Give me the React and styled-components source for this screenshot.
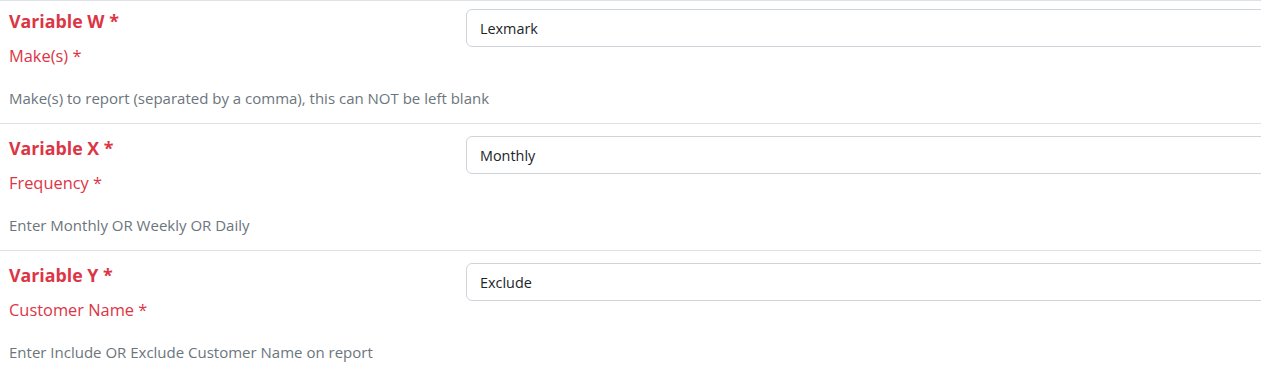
import React from "react";
import styled, { createGlobalStyle } from "styled-components";

const GlobalStyle = createGlobalStyle`
  html, body {
    margin: 0;
    padding: 0;
    background: #fff;
    overflow: hidden;
  }
  body {
    font-family: "Open Sans", "Noto Sans", sans-serif;
  }
`;

const Form = styled.div`
  width: 1290px;
  border-top: 1px solid #dee2e6;
`;

const Row = styled.div`
  display: grid;
  grid-template-columns: 466px 1fr;
  align-items: start;
  padding: ${(p) => (p.$first ? "8px" : "12px")} 0 14px;
  border-bottom: 1px solid #dee2e6;
`;

const LabelCol = styled.div`
  display: flex;
  flex-direction: column;
  min-width: 0;
  padding-left: 9px;
  white-space: nowrap;
`;

const Title = styled.div`
  font-size: 17.8px;
  line-height: 24px;
  font-weight: 700;
  color: #dc3545;
`;

const Label = styled.label`
  margin-top: 11px;
  font-size: 16.4px;
  line-height: 24px;
  color: #dc3545;
`;

const Help = styled.div`
  margin-top: 20px;
  font-size: 15px;
  line-height: 21px;
  color: #6c757d;
  white-space: nowrap;
`;

const Input = styled.input`
  box-sizing: border-box;
  display: block;
  width: 100%;
  height: 38px;
  padding: 0 13px;
  border: 1px solid #ced4da;
  border-radius: 6px;
  font-family: inherit;
  font-size: 14.4px;
  color: #212529;
  background: #fff;
  outline: none;
`;

const fields = [
  {
    title: "Variable W *",
    label: "Make(s) *",
    value: "Lexmark",
    help: "Make(s) to report (separated by a comma), this can NOT be left blank",
  },
  {
    title: "Variable X *",
    label: "Frequency *",
    value: "Monthly",
    help: "Enter Monthly OR Weekly OR Daily",
  },
  {
    title: "Variable Y *",
    label: "Customer Name *",
    value: "Exclude",
    help: "Enter Include OR Exclude Customer Name on report",
  },
];

const App = () => {
  return (
    <>
      <GlobalStyle />
      <Form>
        {fields.map((f, i) => (
          <Row key={f.title} $first={i === 0}>
            <LabelCol>
              <Title>{f.title}</Title>
              <Label>{f.label}</Label>
              <Help>{f.help}</Help>
            </LabelCol>
            <div>
              <Input defaultValue={f.value} />
            </div>
          </Row>
        ))}
      </Form>
    </>
  );
};

export default App;
